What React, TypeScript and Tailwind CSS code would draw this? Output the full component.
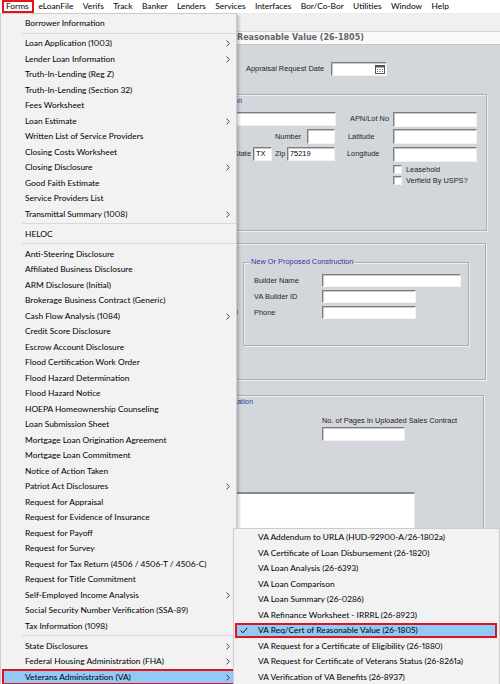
import React from 'react';

type Item = { t: string; sub?: boolean; active?: boolean } | 'sep';

const mainItems: Item[] = [
  { t: 'Borrower Information' },
  'sep',
  { t: 'Loan Application (1003)', sub: true },
  { t: 'Lender Loan Information', sub: true },
  { t: 'Truth-In-Lending (Reg Z)' },
  { t: 'Truth-In-Lending (Section 32)' },
  { t: 'Fees Worksheet' },
  { t: 'Loan Estimate', sub: true },
  { t: 'Written List of Service Providers' },
  { t: 'Closing Costs Worksheet' },
  { t: 'Closing Disclosure', sub: true },
  { t: 'Good Faith Estimate' },
  { t: 'Service Providers List' },
  { t: 'Transmittal Summary (1008)', sub: true },
  'sep',
  { t: 'HELOC' },
  'sep',
  { t: 'Anti-Steering Disclosure' },
  { t: 'Affiliated Business Disclosure' },
  { t: 'ARM Disclosure (Initial)' },
  { t: 'Brokerage Business Contract (Generic)' },
  { t: 'Cash Flow Analysis (1084)', sub: true },
  { t: 'Credit Score Disclosure' },
  { t: 'Escrow Account Disclosure' },
  { t: 'Flood Certification Work Order' },
  { t: 'Flood Hazard Determination' },
  { t: 'Flood Hazard Notice' },
  { t: 'HOEPA Homeownership Counseling' },
  { t: 'Loan Submission Sheet' },
  { t: 'Mortgage Loan Origination Agreement' },
  { t: 'Mortgage Loan Commitment' },
  { t: 'Notice of Action Taken' },
  { t: 'Patriot Act Disclosures', sub: true },
  { t: 'Request for Appraisal' },
  { t: 'Request for Evidence of Insurance' },
  { t: 'Request for Payoff' },
  { t: 'Request for Survey' },
  { t: 'Request for Tax Return (4506 / 4506-T / 4506-C)' },
  { t: 'Request for Title Commitment' },
  { t: 'Self-Employed Income Analysis', sub: true },
  { t: 'Social Security Number Verification (SSA-89)' },
  { t: 'Tax Information (1098)' },
  'sep',
  { t: 'State Disclosures', sub: true },
  { t: 'Federal Housing Administration (FHA)', sub: true },
  { t: 'Veterans Administration (VA)', sub: true, active: true },
];

const vaItems = [
  'VA Addendum to URLA (HUD-92900-A/26-1802a)',
  'VA Certificate of Loan Disbursement (26-1820)',
  'VA Loan Analysis (26-6393)',
  'VA Loan Comparison',
  'VA Loan Summary (26-0286)',
  'VA Refinance Worksheet - IRRRL (26-8923)',
  'VA Req/Cert of Reasonable Value (26-1805)',
  'VA Request for a Certificate of Eligibility (26-1880)',
  'VA Request for Certificate of Veterans Status (26-8261a)',
  'VA Verification of VA Benefits (26-8937)',
];

const menuBar = ['Forms', 'eLoanFile', 'Verifs', 'Track', 'Banker', 'Lenders', 'Services', 'Interfaces', 'Bor/Co-Bor', 'Utilities', 'Window', 'Help'];

function Chevron() {
  return (
    <svg width="4" height="7" viewBox="0 0 4 7" className="absolute left-[225px] top-[4.5px]">
      <polyline points="0.6,0.6 3.3,3.5 0.6,6.4" fill="none" stroke="#333" strokeWidth="0.9" />
    </svg>
  );
}

function Field({ cls, value }: { cls: string; value?: string }) {
  return (
    <div
      className={`shrink-0 bg-white border border-[#7d7d7d] border-r-[#f2f2f2] border-b-[#f2f2f2] shadow-[inset_1px_1px_0_#c8c8c8] flex items-center pl-[2px] text-[7.4px] leading-none text-black ${cls}`}
    >
      {value}
    </div>
  );
}

function CheckBox() {
  return <div className="shrink-0 w-[9px] h-[9px] bg-white border border-[#7d7d7d] border-r-[#f2f2f2] border-b-[#f2f2f2] shadow-[inset_1px_1px_0_#c8c8c8]" />;
}

function Label({ cls, children }: { cls: string; children: React.ReactNode }) {
  return <div className={`shrink-0 whitespace-nowrap text-[7.4px] leading-none text-[#1e1e1e] ${cls}`}>{children}</div>;
}

export default function App() {
  return (
    <div className="relative w-[500px] h-[684px] overflow-hidden bg-[#d3d7db] font-['Liberation_Sans',Arial,sans-serif]">
      {/* Menu bar */}
      <div className="h-[14px] bg-white border-b border-[#ececec] flex items-center pl-[2px] font-['Lato',sans-serif] text-[8.4px] proportional-nums text-black">
        {menuBar.map((m, i) => (
          <div key={m} className={`relative h-[13px] flex items-center ${i === 0 ? 'pl-[4px] pr-[5px]' : 'px-[4.7px]'}`}>
            {m}
            {i === 0 && <span className="absolute inset-0 border-2 border-[#e3131b]" />}
          </div>
        ))}
      </div>

      {/* Toolbar */}
      <div className="h-[18px] bg-[#f0f0f0] border-b border-[#d6d6d6]" />

      {/* Title strip */}
      <div className="h-[13px] bg-[#fafafa] border-b border-[#c4c7ca] flex items-center font-['DejaVu_Sans',Verdana,sans-serif] font-bold text-[8px] leading-none text-[#666]">
        <span className="w-[237px] shrink-0 text-right pr-[3px] whitespace-nowrap overflow-hidden">VA Req/Cert of</span>
        <span className="whitespace-nowrap">Reasonable Value (26-1805)</span>
      </div>

      {/* Form */}
      <div className="flex flex-col">
        <div className="mt-[17px] h-[14px] flex items-center pl-[246px]">
          <Label cls="w-[85px]">Appraisal Request Date</Label>
          <div className="w-[56px] h-[14px] shrink-0 bg-white border border-[#7d7d7d] border-r-[#f2f2f2] border-b-[#f2f2f2] shadow-[inset_1px_1px_0_#c8c8c8] flex items-center justify-end pr-[1px]">
            <svg width="10" height="9" viewBox="0 0 10 9">
              <rect x="0.5" y="0.5" width="9" height="8" fill="#fff" stroke="#555" />
              <rect x="0.5" y="0.5" width="9" height="2" fill="#555" />
              <rect x="2" y="4" width="1" height="1" fill="#666" />
              <rect x="4.5" y="4" width="1" height="1" fill="#666" />
              <rect x="7" y="4" width="1" height="1" fill="#666" />
              <rect x="2" y="6" width="1" height="1" fill="#666" />
              <rect x="4.5" y="6" width="1" height="1" fill="#c0392b" />
              <rect x="7" y="6" width="1" height="1" fill="#666" />
            </svg>
          </div>
        </div>

        {/* Box 1 */}
        <div className="relative mt-[18px] ml-[5px] w-[482px] h-[137px] border border-[#a9aeb3] shadow-[inset_1px_1px_0_#eef0f2,1px_1px_0_#eef0f2]">
          <div className="absolute left-0 top-[-5px] w-[237px] text-right leading-none">
            <span className="bg-[#d3d7db] pl-[1px] pr-[1px] text-[7.4px] text-[#2b3aa3] whitespace-nowrap">Property Location</span>
          </div>
          <div className="pt-[17px] flex flex-col">
            <div className="h-[14px] flex items-center">
              <div className="w-[194px] shrink-0" />
              <Field cls="w-[136px] h-[14px]" />
              <div className="w-[14px] shrink-0" />
              <Label cls="w-[43px]">APN/Lot No</Label>
              <Field cls="w-[84px] h-[15px]" />
            </div>
            <div className="mt-[3px] h-[15px] flex items-center">
              <div className="w-[269px] shrink-0" />
              <Label cls="w-[32px]">Number</Label>
              <Field cls="w-[28px] h-[15px]" />
              <div className="w-[13px] shrink-0" />
              <Label cls="w-[45px]">Latitude</Label>
              <Field cls="w-[84px] h-[15px]" />
            </div>
            <div className="mt-[3px] h-[14px] flex items-center">
              <div className="w-[194px] shrink-0" />
              <Label cls="w-[53px] text-right pr-[2px]">State</Label>
              <Field cls="w-[19px] h-[14px]" value="TX" />
              <div className="w-[3px] shrink-0" />
              <Label cls="w-[12px]">Zip</Label>
              <Field cls="w-[48px] h-[14px]" value="75219" />
              <div className="w-[12px] shrink-0" />
              <Label cls="w-[46px]">Longitude</Label>
              <Field cls="w-[84px] h-[15px]" />
            </div>
            <div className="mt-[4px] h-[9px] flex items-center">
              <div className="w-[387px] shrink-0" />
              <CheckBox />
              <Label cls="ml-[4px]">Leasehold</Label>
            </div>
            <div className="mt-[2px] h-[9px] flex items-center">
              <div className="w-[387px] shrink-0" />
              <CheckBox />
              <Label cls="ml-[4px]">Verfield By USPS?</Label>
            </div>
          </div>
        </div>

        {/* Box 2 */}
        <div className="mt-[12px] ml-[5px] w-[481px] h-[137px] border border-[#a9aeb3] shadow-[inset_1px_1px_0_#eef0f2,1px_1px_0_#eef0f2] flex">
          <div className="w-[232px] shrink-0 pt-[64px] text-right text-[7.4px] leading-none text-[#2b3aa3] whitespace-nowrap overflow-hidden">Legal Description</div>
          <div className="relative mt-[18px] ml-[5px] w-[226px] h-[84px] border border-[#a9aeb3] shadow-[inset_1px_1px_0_#eef0f2,1px_1px_0_#eef0f2]">
            <span className="absolute left-[6px] top-[-5px] bg-[#d3d7db] px-[1px] text-[7.4px] leading-none text-[#2b3aa3] whitespace-nowrap">New Or Proposed Construction</span>
            <div className="pt-[11px] flex flex-col">
              <div className="h-[13px] flex items-center pl-[10px]">
                <Label cls="w-[68px]">Builder Name</Label>
                <Field cls="w-[139px] h-[13px]" />
              </div>
              <div className="mt-[3px] h-[13px] flex items-center pl-[10px]">
                <Label cls="w-[68px]">VA Builder ID</Label>
                <Field cls="w-[94px] h-[13px]" />
              </div>
              <div className="mt-[3px] h-[13px] flex items-center pl-[10px]">
                <Label cls="w-[68px]">Phone</Label>
                <Field cls="w-[94px] h-[13px]" />
              </div>
            </div>
          </div>
        </div>

        {/* Box 3 */}
        <div className="relative mt-[15px] ml-[5px] w-[479px] h-[300px] border border-[#a9aeb3] shadow-[inset_1px_1px_0_#eef0f2,1px_1px_0_#eef0f2]">
          <div className="absolute left-0 top-[-5px] w-[248px] text-right leading-none">
            <span className="bg-[#d3d7db] px-[1px] text-[7.4px] text-[#2b3aa3] whitespace-nowrap">Sales Contract Information</span>
          </div>
          <div className="pt-[20px] pl-[316px] flex flex-col">
            <Label cls="h-[9px] flex items-center">No. of Pages In Uploaded Sales Contract</Label>
            <Field cls="mt-[2px] w-[83px] h-[14px]" />
          </div>
          <div className="mt-[51px] ml-[94px] w-[315px] h-[80px] bg-white border-t-2 border-l border-[#8a8a8a] border-r border-r-[#e8e8e8]" />
        </div>
      </div>

      {/* Forms dropdown */}
      <div className="absolute left-0 top-[13px] w-[237px] bg-[#f2f2f2] border border-[#cccccc] pt-[1.5px] shadow-[2px_2px_3px_rgba(0,0,0,0.22)] font-['Lato',sans-serif] text-[8.4px] proportional-nums leading-none text-black">
        {mainItems.map((it, i) =>
          it === 'sep' ? (
            <div key={i} className="h-[4.5px] flex items-center">
              <div className="ml-[21px] flex-1 h-px bg-[#d9d9d9]" />
            </div>
          ) : (
            <div key={i} className="relative h-[15.5px] flex items-center pl-[24px] whitespace-nowrap">
              {it.active && <span className="absolute left-[1px] right-[-1px] inset-y-0 bg-[#91c9f7] border-2 border-[#e3131b]" />}
              <span className="relative">{it.t}</span>
              {it.sub && <Chevron />}
            </div>
          )
        )}
      </div>

      {/* VA submenu */}
      <div className="absolute left-[233px] top-[527.5px] w-[267px] bg-[#f2f2f2] border border-[#cccccc] pt-[1px] shadow-[2px_2px_3px_rgba(0,0,0,0.22)] font-['Lato',sans-serif] text-[8.4px] proportional-nums leading-none text-black">
        {vaItems.map((t, i) => (
          <div key={t} className="relative h-[15.5px] flex items-center pl-[24px] whitespace-nowrap">
            {i === 6 && (
              <>
                <span className="absolute left-[1px] right-[2px] inset-y-0 bg-[#91c9f7] border-2 border-[#e3131b]" />
                <svg width="8" height="7" viewBox="0 0 8 7" className="absolute left-[6px] top-[4.5px]">
                  <polyline points="0.6,3.6 2.8,5.8 7.4,0.8" fill="none" stroke="#111" strokeWidth="1" />
                </svg>
              </>
            )}
            <span className="relative">{t}</span>
          </div>
        ))}
      </div>
    </div>
  );
}
